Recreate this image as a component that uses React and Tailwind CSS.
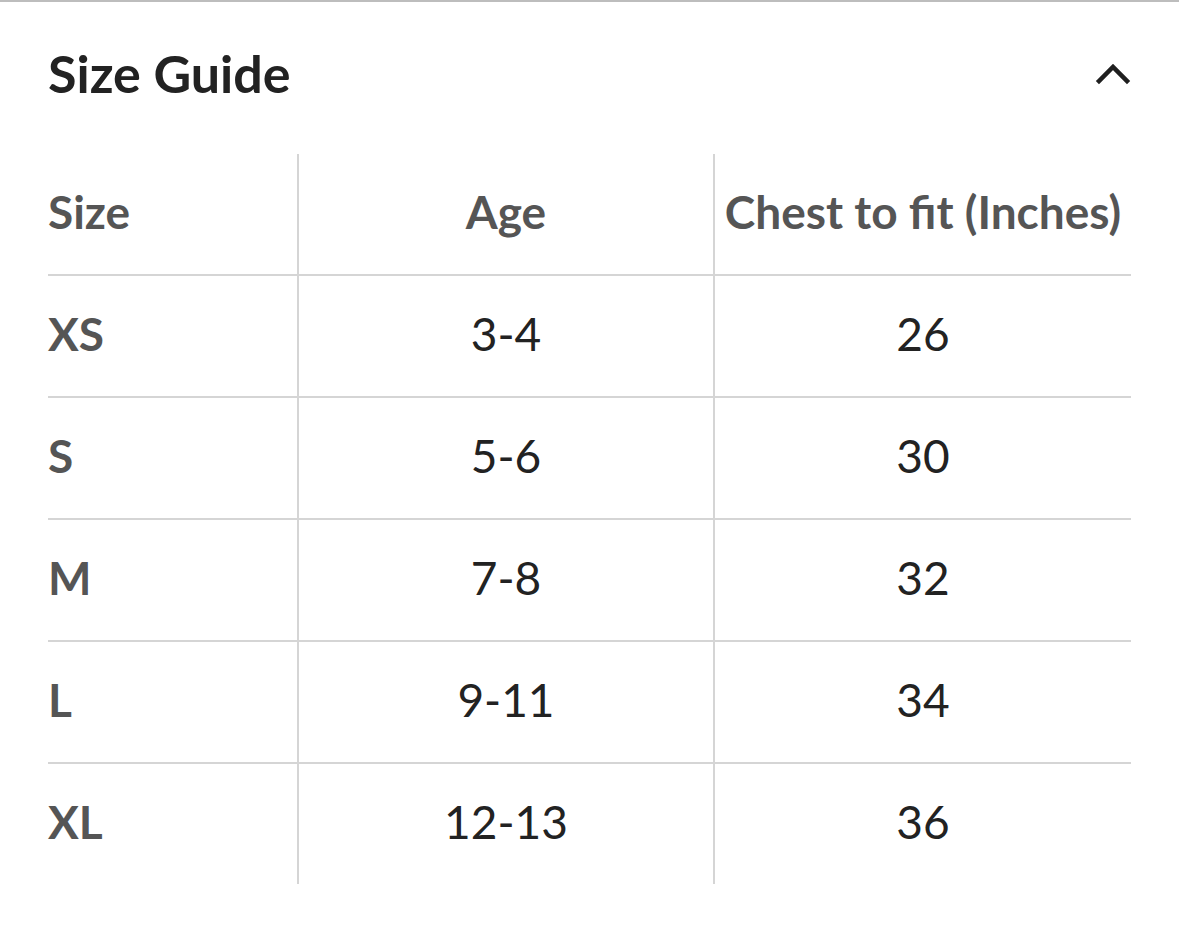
const rows = [
  { size: "XS", age: "3-4", chest: "26" },
  { size: "S", age: "5-6", chest: "30" },
  { size: "M", age: "7-8", chest: "32" },
  { size: "L", age: "9-11", chest: "34" },
  { size: "XL", age: "12-13", chest: "36" },
];

function ChevronUp() {
  return (
    <svg width="36" height="24" viewBox="0 0 36 24" fill="none">
      <path
        d="M4 20 L18 6 L32 20"
        stroke="#1f1f1f"
        strokeWidth="4.5"
        strokeLinecap="square"
        strokeLinejoin="miter"
      />
    </svg>
  );
}

function App() {
  return (
    <main
      className="min-h-screen w-full bg-white border-t-2 border-[#bdbdbd]"
      style={{ fontFamily: "Lato, 'Open Sans', sans-serif" }}
    >
      {/* header */}
      <div className="flex items-center justify-between pl-12 pr-[48px] pt-[45px]">
        <h1 className="text-[52px] leading-[52px] font-bold text-[#222222]">
          Size Guide
        </h1>
        <ChevronUp />
      </div>

      {/* table */}
      <div className="mx-12 mt-[55px] grid grid-cols-[249px_416px_418px] text-[46px]">
        <div className="h-[122px] pb-[6px] flex items-center border-b-2 border-[#d5d5d5] font-bold text-[#555555]">
          Size
        </div>
        <div className="h-[122px] pb-[6px] flex items-center justify-center border-b-2 border-l-2 border-[#d5d5d5] font-bold text-[#555555]">
          Age
        </div>
        <div className="h-[122px] pb-[6px] flex items-center justify-center border-b-2 border-l-2 border-[#d5d5d5] font-bold text-[#555555]">
          Chest to fit (Inches)
        </div>

        {rows.map((row, i) => {
          const last = i === rows.length - 1;
          return [
            <div
              key={row.size + "-s"}
              className={
                last
                  ? "h-[120px] pb-[6px] flex items-center font-bold text-[#555555]"
                  : "h-[122px] pb-[6px] flex items-center border-b-2 border-[#d5d5d5] font-bold text-[#555555]"
              }
            >
              {row.size}
            </div>,
            <div
              key={row.size + "-a"}
              className={
                last
                  ? "h-[120px] pb-[6px] flex items-center justify-center border-l-2 border-[#d5d5d5] text-[#222222]"
                  : "h-[122px] pb-[6px] flex items-center justify-center border-b-2 border-l-2 border-[#d5d5d5] text-[#222222]"
              }
            >
              {row.age}
            </div>,
            <div
              key={row.size + "-c"}
              className={
                last
                  ? "h-[120px] pb-[6px] flex items-center justify-center border-l-2 border-[#d5d5d5] text-[#222222]"
                  : "h-[122px] pb-[6px] flex items-center justify-center border-b-2 border-l-2 border-[#d5d5d5] text-[#222222]"
              }
            >
              {row.chest}
            </div>,
          ];
        })}
      </div>
    </main>
  );
}

export default App;
